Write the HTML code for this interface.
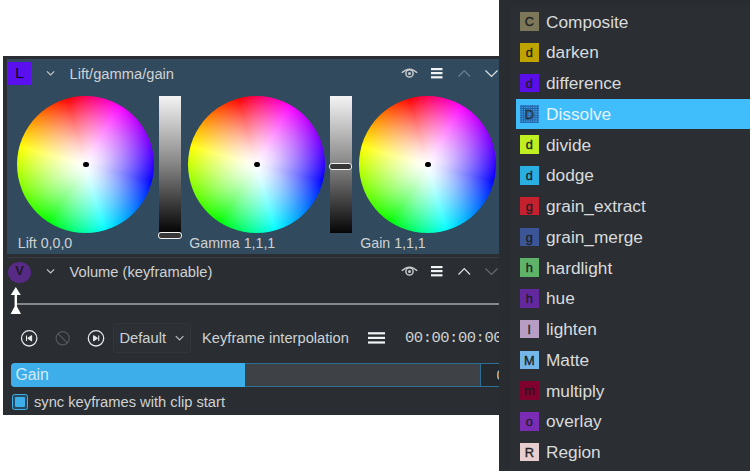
<!DOCTYPE html>
<html><head><meta charset="utf-8"><title>Kdenlive effects</title>
<style>
html,body{margin:0;padding:0;}
body{width:750px;height:471px;overflow:hidden;background:#fff;position:relative;font-family:"Liberation Sans",sans-serif;color:#e3e5e7;}
div,svg,span{position:absolute;box-sizing:border-box;}
#panel{left:3px;top:56px;width:497px;height:359.2px;background:#2a2e32;}
#blue{left:7px;top:59.3px;width:493px;height:195.2px;background:#314a5d;}
#sep{left:7px;top:256.8px;width:492px;height:1px;background:#393d42;}
.lbl{font-size:14.7px;line-height:18px;white-space:nowrap;color:#cfd2d5;}
.sm{font-size:14.2px;}
.wheel{border-radius:50%;background:radial-gradient(circle closest-side,rgba(255,255,255,1.000) 0%,rgba(255,255,255,0.950) 10%,rgba(255,255,255,0.877) 20%,rgba(255,255,255,0.791) 30%,rgba(255,255,255,0.696) 40%,rgba(255,255,255,0.594) 50%,rgba(255,255,255,0.485) 60%,rgba(255,255,255,0.371) 70%,rgba(255,255,255,0.252) 80%,rgba(255,255,255,0.128) 90%,rgba(255,255,255,0.000) 100%),conic-gradient(from -15deg,#f00 0deg,#f0f 45deg,#00f 119deg,#0ff 179deg,#0f0 228deg,#ff0 300deg,#f00 360deg);}
.dot{width:5.8px;height:5.8px;border-radius:50%;background:#000;}
.vs{width:22.2px;background:linear-gradient(#f4f4f4,#8a8a8a 48%,#060606);}
.hd{width:23.4px;height:6.9px;border:1.9px solid #f2f2f2;border-radius:3px;background:#383838;}
#licon{left:8.2px;top:62.2px;width:22.6px;height:23px;background:#5a10ee;color:#07000f;font-size:15.5px;line-height:22.5px;text-align:center;}
#vicon{left:8.2px;top:261.8px;width:22.6px;height:21px;border-radius:50%;background:#572a86;color:#1e1a26;font-size:13px;font-weight:bold;line-height:17.5px;text-align:center;}
.hicons{left:399.5px;}
#menu{left:499px;top:0;width:251px;height:471px;background:#292d31;}
#menuin{left:510px;top:6px;width:240px;height:465px;background:#2b2f34;}
.ic{left:520px;width:18.5px;height:18.7px;color:#1d1f22;font-size:12.8px;-webkit-text-stroke:0.35px #1d1f22;line-height:20.2px;text-align:center;}
.mt{left:546px;font-size:17.25px;line-height:24px;white-space:nowrap;color:#d9dbdd;}
.mt.sel{color:#e4f4fd;}
.ic.sel{background:radial-gradient(circle,#1f5fa6 0.75px,rgba(31,95,166,0) 0.95px) 0 0/2.3px 2.3px,#3a93d4 !important;color:#2b4660;}
.hl{left:516px;width:234px;height:30.5px;background:#40bdfb;}
</style></head><body>
<div id="panel"></div>
<div id="blue"></div>
<div id="licon">L</div>
<svg style="left:45px;top:69px" width="12" height="9" viewBox="0 0 12 9"><path d="M2 2.4 L5.6 6 L9.2 2.4" fill="none" stroke="#c3c7ca" stroke-width="1.2"/></svg>
<div class="lbl" style="left:69.5px;top:64.5px">Lift/gamma/gain</div>
<svg class="hicons" style="top:63px" width="110" height="20" viewBox="0 0 110 20">
<path d="M1.8 9.8 Q9.5 2.6 17.2 9.8" fill="none" stroke="#c9ccce" stroke-width="1.5"/>
<circle cx="9.5" cy="10.4" r="3.6" fill="none" stroke="#c9ccce" stroke-width="1.5"/>
<circle cx="9.5" cy="10.4" r="1.5" fill="#c9ccce"/>
<rect x="31" y="5" width="11.5" height="2.2" fill="#f2f3f4"/><rect x="31" y="9" width="11.5" height="2.2" fill="#f2f3f4"/><rect x="31" y="13.2" width="11.5" height="2.2" fill="#f2f3f4"/>
<path d="M58.5 13.5 L64.3 7.7 L70 13.5" fill="none" stroke="#6a8293" stroke-width="1.2"/>
<path d="M85.5 7.5 L91.5 13.5 L97.5 7.5" fill="none" stroke="#dfe2e4" stroke-width="1.2"/>
</svg>
<div class="wheel" style="left:17.3px;top:96.1px;width:137.0px;height:137.0px"></div><div class="dot" style="left:82.9px;top:161.7px"></div>
<div class="wheel" style="left:188.3px;top:96.1px;width:137.0px;height:137.0px"></div><div class="dot" style="left:253.9px;top:161.7px"></div>
<div class="wheel" style="left:359.3px;top:96.1px;width:137.0px;height:137.0px"></div><div class="dot" style="left:424.9px;top:161.7px"></div>
<div class="vs" style="left:158.8px;top:96px;height:136px"></div>
<div class="hd" style="left:158.2px;top:231.8px"></div>
<div class="vs" style="left:329.6px;top:96px;height:137.3px"></div>
<div class="hd" style="left:329px;top:162.8px"></div>
<div class="lbl sm" style="left:17.8px;top:233.6px">Lift 0,0,0</div>
<div class="lbl sm" style="left:189.3px;top:233.6px">Gamma 1,1,1</div>
<div class="lbl sm" style="left:360.3px;top:233.6px">Gain 1,1,1</div>
<div id="sep"></div>
<div id="vicon">V</div>
<svg style="left:45px;top:267px" width="12" height="9" viewBox="0 0 12 9"><path d="M2 2.4 L5.6 6 L9.2 2.4" fill="none" stroke="#c3c7ca" stroke-width="1.2"/></svg>
<div class="lbl" style="left:69.5px;top:262.5px">Volume (keyframable)</div>
<svg class="hicons" style="top:261px" width="110" height="20" viewBox="0 0 110 20">
<path d="M1.8 9.8 Q9.5 2.6 17.2 9.8" fill="none" stroke="#c9ccce" stroke-width="1.5"/>
<circle cx="9.5" cy="10.4" r="3.6" fill="none" stroke="#c9ccce" stroke-width="1.5"/>
<circle cx="9.5" cy="10.4" r="1.5" fill="#c9ccce"/>
<rect x="31" y="5" width="11.5" height="2.2" fill="#f2f3f4"/><rect x="31" y="9" width="11.5" height="2.2" fill="#f2f3f4"/><rect x="31" y="13.2" width="11.5" height="2.2" fill="#f2f3f4"/>
<path d="M58.5 13.5 L64.3 7.7 L70 13.5" fill="none" stroke="#dfe2e4" stroke-width="1.2"/>
<path d="M85.5 7.5 L91.5 13.5 L97.5 7.5" fill="none" stroke="#676b6f" stroke-width="1.2"/>
</svg>
<div style="left:16px;top:302.7px;width:483px;height:2.2px;background:#85888b"></div>
<svg style="left:9px;top:285px" width="14" height="31" viewBox="0 0 14 31"><path d="M6.8 2 L11.8 10 L8 10 L8 21.5 L12 29 L1.6 29 L5.6 21.5 L5.6 10 L1.8 10 Z" fill="#fff"/></svg>
<svg style="left:18px;top:327px" width="92" height="23" viewBox="0 0 92 23">
<circle cx="11.2" cy="11.3" r="7.7" fill="none" stroke="#e6e8ea" stroke-width="1.3"/>
<path d="M8.5 8.6 V14 M13.6 8.8 L10 11.3 L13.6 13.8 Z" fill="#e6e8ea" stroke="#e6e8ea" stroke-width="1.1" stroke-linejoin="round"/>
<circle cx="44.7" cy="11.3" r="6.6" fill="none" stroke="#53575b" stroke-width="1.2"/><path d="M40 6.6 L49.4 16" stroke="#53575b" stroke-width="1.2"/>
<circle cx="78" cy="11.3" r="7.7" fill="none" stroke="#e6e8ea" stroke-width="1.3"/>
<path d="M80.7 8.6 V14 M75.6 8.8 L79.2 11.3 L75.6 13.8 Z" fill="#e6e8ea" stroke="#e6e8ea" stroke-width="1.1" stroke-linejoin="round"/>
</svg>
<div style="left:113px;top:323px;width:78px;height:30px;border:1px solid #32363b;border-radius:3px;background:#2c3034"></div>
<div class="lbl" style="left:119.5px;top:329px">Default</div>
<svg style="left:174px;top:334px" width="12" height="9" viewBox="0 0 12 9"><path d="M1.8 2.2 L5.6 6 L9.4 2.2" fill="none" stroke="#b9bcbf" stroke-width="1.2"/></svg>
<div class="lbl" style="left:202px;top:329px">Keyframe interpolation</div>
<svg style="left:367px;top:331px" width="20" height="14" viewBox="0 0 20 14"><rect x="1" y="1.2" width="17" height="2.2" fill="#f2f3f4"/><rect x="1" y="5.8" width="17" height="2.2" fill="#f2f3f4"/><rect x="1" y="10.4" width="17" height="2.2" fill="#f2f3f4"/></svg>
<div class="lbl" style="left:405px;top:329px;font-family:'Liberation Mono',monospace;font-size:15.5px;letter-spacing:-0.48px;width:93.6px;overflow:hidden;color:#cfd2d4">00:00:00:00</div>
<div style="left:10.5px;top:362.6px;width:488.5px;height:24.2px;background:#3e4246;border:1px solid #2f6f94;border-right:none;border-radius:4px 0 0 4px"></div>
<div style="left:10.5px;top:362.6px;width:234.7px;height:24.2px;background:#3daee9;border-radius:4px 0 0 4px"></div>
<div style="left:480px;top:362.6px;width:19px;height:24.2px;background:#25292d;border:1px solid #2f6f94;border-right:none"></div>
<div class="lbl" style="left:496.6px;top:366px;width:2.4px;overflow:hidden;color:#c9ccce">0</div>
<div class="lbl" style="left:15.5px;top:365.6px;font-size:15.8px;color:#d3ebf9">Gain</div>
<div style="left:12.4px;top:394px;width:16px;height:16px;border:1.5px solid #3daee9;border-radius:2.5px;background:#274a60"></div>
<div style="left:15.4px;top:397px;width:10px;height:10px;background:#3daee9;border-radius:1px"></div>
<div class="lbl" style="left:34px;top:393px">sync keyframes with clip start</div>
<div id="menu"></div><div id="menuin"></div>
<div class="ic" style="top:12.25px;background:#7d775a">C</div><div class="mt" style="top:9.65px">Composite</div>
<div class="ic" style="top:43.00px;background:#bfa400">d</div><div class="mt" style="top:40.40px">darken</div>
<div class="ic" style="top:73.75px;background:#5a0ee8">d</div><div class="mt" style="top:71.15px">difference</div>
<div class="hl" style="top:98.80px"></div>
<div class="ic sel" style="top:104.50px;background:#2f7fc0">D</div><div class="mt sel" style="top:101.90px">Dissolve</div>
<div class="ic" style="top:135.25px;background:#bfef20">d</div><div class="mt" style="top:132.65px">divide</div>
<div class="ic" style="top:166.00px;background:#2aafe2">d</div><div class="mt" style="top:163.40px">dodge</div>
<div class="ic" style="top:196.75px;background:#c4202e">g</div><div class="mt" style="top:194.15px">grain_extract</div>
<div class="ic" style="top:227.50px;background:#3c5596">g</div><div class="mt" style="top:224.90px">grain_merge</div>
<div class="ic" style="top:258.25px;background:#5fb368">h</div><div class="mt" style="top:255.65px">hardlight</div>
<div class="ic" style="top:289.00px;background:#64289e">h</div><div class="mt" style="top:286.40px">hue</div>
<div class="ic" style="top:319.75px;background:#b79cc4">l</div><div class="mt" style="top:317.15px">lighten</div>
<div class="ic" style="top:350.50px;background:#74b6ea">M</div><div class="mt" style="top:347.90px">Matte</div>
<div class="ic" style="top:381.25px;background:#80002e">m</div><div class="mt" style="top:378.65px">multiply</div>
<div class="ic" style="top:412.00px;background:#7a2cb4">o</div><div class="mt" style="top:409.40px">overlay</div>
<div class="ic" style="top:442.75px;background:#e6cece">R</div><div class="mt" style="top:440.15px">Region</div>

</body></html>
